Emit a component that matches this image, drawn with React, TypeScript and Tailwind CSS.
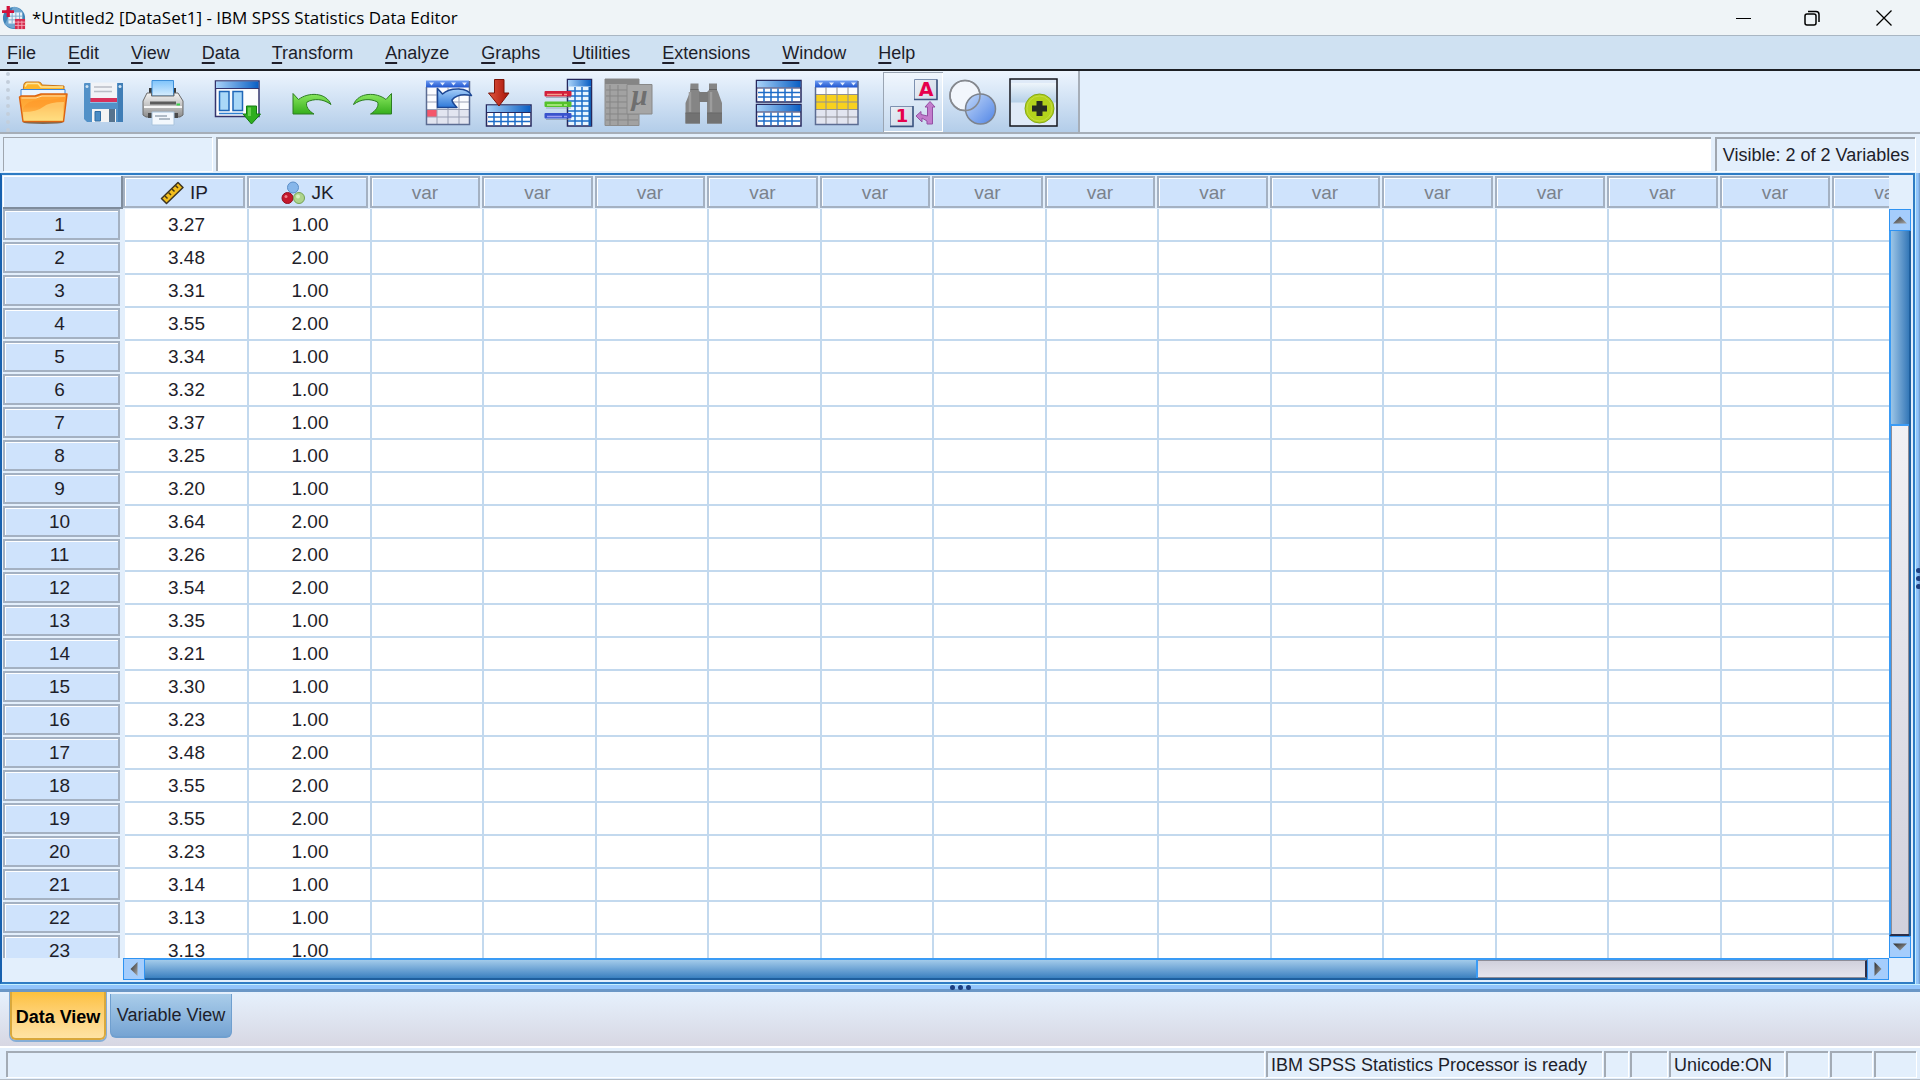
import type { ReactNode } from "react";

// ── Data ─────────────────────────────────────────────────────────────

const MENUS = [
	"File",
	"Edit",
	"View",
	"Data",
	"Transform",
	"Analyze",
	"Graphs",
	"Utilities",
	"Extensions",
	"Window",
	"Help",
];

const CASES: [string, string][] = [
	["3.27", "1.00"],
	["3.48", "2.00"],
	["3.31", "1.00"],
	["3.55", "2.00"],
	["3.34", "1.00"],
	["3.32", "1.00"],
	["3.37", "1.00"],
	["3.25", "1.00"],
	["3.20", "1.00"],
	["3.64", "2.00"],
	["3.26", "2.00"],
	["3.54", "2.00"],
	["3.35", "1.00"],
	["3.21", "1.00"],
	["3.30", "1.00"],
	["3.23", "1.00"],
	["3.48", "2.00"],
	["3.55", "2.00"],
	["3.55", "2.00"],
	["3.23", "1.00"],
	["3.14", "1.00"],
	["3.13", "1.00"],
	["3.13", "1.00"],
];

const EMPTY_COLUMNS = Array.from({ length: 14 }, (_, i) => i);

// ── Toolbar icons (60x60 grid) ───────────────────────────────────────

function Lines({ xs = [], ys = [], x1, x2, y1, y2, color, width = 1 }: {
	xs?: number[];
	ys?: number[];
	x1: number;
	x2: number;
	y1: number;
	y2: number;
	color: string;
	width?: number;
}) {
	return (
		<g stroke={color} strokeWidth={width}>
			{xs.map((x) => <path key={`x${x}`} d={`M${x} ${y1}V${y2}`} />)}
			{ys.map((y) => <path key={`y${y}`} d={`M${x1} ${y}H${x2}`} />)}
		</g>
	);
}

function Gradients() {
	return (
		<svg className="absolute size-0" aria-hidden="true">
			<defs>
				<linearGradient id="folder" x1="0" y1="0" x2="0" y2="1">
					<stop offset="0" stopColor="#ffa02c" />
					<stop offset="0.45" stopColor="#ffab3a" />
					<stop offset="1" stopColor="#fff08a" />
				</linearGradient>
				<linearGradient id="bar" x1="0" y1="0" x2="1" y2="0">
					<stop offset="0" stopColor="#a9d2f8" />
					<stop offset="1" stopColor="#0a5fc4" />
				</linearGradient>
				<linearGradient id="sheetHead" x1="0" y1="0" x2="0" y2="1">
					<stop offset="0" stopColor="#6f9df2" />
					<stop offset="1" stopColor="#1f55cf" />
				</linearGradient>
				<linearGradient id="paper" x1="0" y1="0" x2="0" y2="1">
					<stop offset="0" stopColor="#7fc4fb" />
					<stop offset="1" stopColor="#d8eefe" />
				</linearGradient>
				<linearGradient id="printer" x1="0" y1="0" x2="0" y2="1">
					<stop offset="0" stopColor="#f4f4f4" />
					<stop offset="0.5" stopColor="#c4c4c4" />
					<stop offset="1" stopColor="#8c8c8c" />
				</linearGradient>
				<linearGradient id="green" x1="0" y1="0" x2="0" y2="1">
					<stop offset="0" stopColor="#8be860" />
					<stop offset="1" stopColor="#35ae1c" />
				</linearGradient>
				<linearGradient id="blueArrow" x1="0" y1="0" x2="0" y2="1">
					<stop offset="0" stopColor="#a8d0fa" />
					<stop offset="1" stopColor="#2e78d8" />
				</linearGradient>
				<linearGradient id="red" x1="0" y1="0" x2="1" y2="0">
					<stop offset="0" stopColor="#e0563f" />
					<stop offset="1" stopColor="#a81208" />
				</linearGradient>
				<linearGradient id="tile" x1="0" y1="0" x2="1" y2="1">
					<stop offset="0" stopColor="#ffffff" />
					<stop offset="1" stopColor="#b9c8de" />
				</linearGradient>
				<linearGradient id="lens" x1="0" y1="0" x2="1" y2="1">
					<stop offset="0" stopColor="#c3d8f8" />
					<stop offset="1" stopColor="#4f84e6" />
				</linearGradient>
				<linearGradient id="glass" x1="0" y1="0" x2="0" y2="1">
					<stop offset="0" stopColor="#eef5fb" />
					<stop offset="1" stopColor="#b4cfe8" />
				</linearGradient>
				<linearGradient id="arrowTip" x1="0" y1="0" x2="1" y2="1">
					<stop offset="0" stopColor="#2c2c2c" />
					<stop offset="1" stopColor="#a8a8a8" />
				</linearGradient>
			</defs>
		</svg>
	);
}

function OpenIcon() {
	return (
		<g strokeLinejoin="round">
			<ellipse cx="30" cy="50.5" rx="20" ry="1.5" fill="#7d6a55" />
			<path d="M9 26 11 12Q11.500 10 14 10H26Q28 10 29 13L51 14V26Z" fill="#fdb62a" stroke="#c8741c" />
			<path d="M12 14.500 14 11.500H25L28 15H50" fill="none" stroke="#ffe69a" strokeWidth="1.500" />
			<path d="M8 17.500H52V25H8Z" fill="#eaf5ff" stroke="#3f86d8" />
			<path d="M6.500 25 8 24H22L28 22H54L50.500 49.500H10Z" fill="url(#folder)" stroke="#dc6412" strokeWidth="1.500" />
			<path d="M9.500 37Q14 27 30 28Q46 28 52 24L49.500 48H11Z" fill="#ff8d20" opacity="0.350" />
			<path d="M10 40Q24 40 30 35T51 30L49.500 48H11Z" fill="#fff6a8" opacity="0.450" />
			<path d="M8.500 26H23L29 24H52" fill="none" stroke="#ffe0a8" />
		</g>
	);
}

function SaveIcon() {
	return (
		<g>
			<path d="M12 11H49Q50 11 50 12V49Q50 50 49 50H14L11 47V12Q11 11 12 11Z" fill="#5291c8" />
			<path d="M45 11H50V50H45Z" fill="#3f7db6" />
			<path d="M17.500 10.500H44V26H17.500Z" fill="#f1f3f7" />
			<path d="M21 15H39M21 19.500H39" stroke="#b9bdc6" strokeWidth="1.500" />
			<path d="M17.500 26H44V30H17.500Z" fill="#d8315b" />
			<path d="M19 37H43V50H19Z" fill="#f4f4f4" />
			<path d="M36 37H42V50H36Z" fill="#56738e" />
			<path d="M22 39.500H27.500V49H22Z" fill="#4b8cc4" stroke="#2f6ca4" />
			<circle cx="14" cy="14.500" r="1.500" fill="#cfe3f4" />
			<circle cx="47" cy="14.500" r="1.500" fill="#cfe3f4" />
			<path d="M17 30.500H44" stroke="#8fbce2" />
		</g>
	);
}

function PrintIcon() {
	return (
		<g strokeLinejoin="round">
			<path d="M16 16H43V23H16Z" fill="#3a3a3a" />
			<path d="M19 8.500H40.500V24H19Z" fill="url(#paper)" stroke="#3c8ed8" />
			<path d="M14 21H18.500V24H41V21H45L50 29V43L47 45H13L10 43V29Z" fill="url(#printer)" stroke="#6a6a6a" />
			<path d="M17 29.500H43V32.500H17Z" fill="#5c5c5c" />
			<path d="M11 34H49V36H11Z" fill="#f6f6f6" />
			<path d="M43.500 31.500H47V33.500H43.500Z" fill="#3bd14a" />
			<path d="M15 41H45V46H15Z" fill="#4a4a4a" />
			<path d="M19 40H41V53H19Z" fill="#f3f8fd" stroke="#a9c4dd" />
			<path d="M22 44H34M26 47H37" stroke="#9aa6b4" strokeWidth="1.500" />
		</g>
	);
}

function RecallIcon() {
	return (
		<g>
			<path d="M7.500 9H51V44.500H7.500Z" fill="#fbfcfe" stroke="#34346c" strokeWidth="1.500" />
			<path d="M8 9.500H50.500V16H8Z" fill="url(#bar)" />
			<path d="M8 16.500H51" stroke="#34346c" />
			<path d="M11.500 19.500H21V38.500H11.500ZM25 19.500H34.500V38.500H25Z" fill="#a9d8f8" stroke="#1e66b8" strokeWidth="1.500" />
			<path d="M11 41.500H35" stroke="#2f7fd0" strokeWidth="1.500" />
			<path d="M38.500 34H48.500V42H52.500L43.500 52 35 42H38.500Z" fill="#2fae1e" stroke="#127a10" />
			<path d="M40 35.500H43V44H40Z" fill="#7fdc60" opacity="0.700" />
		</g>
	);
}

const CURVED_ARROW = "M10 21.500 15.500 27.500C25 20 43 20 48 32.500C40 26.500 31 26.500 24 30C22 34 26 39 31 42H10Z";

function UndoIcon() {
	return <path d={CURVED_ARROW} fill="url(#green)" stroke="#2c7d22" strokeLinejoin="round" />;
}

function RedoIcon() {
	return (
		<g transform="translate(58.500 0) scale(-1 1)">
			<path d={CURVED_ARROW} fill="url(#green)" stroke="#2c7d22" strokeLinejoin="round" />
		</g>
	);
}

function SheetBase({ x }: { x: number }) {
	const columns = [0, 11, 22, 33];
	return (
		<g>
			<path d={`M${x} 9H${x + 43}V52.500H${x}Z`} fill="#fbfcff" />
			<path d={`M${x} 38H${x + 43}V52.500H${x}Z`} fill="#e2e5f0" />
			<path d={`M${x} 8.500H${x + 43}V15.500H${x}Z`} fill="url(#sheetHead)" />
			{columns.map((c) => (
				<path key={c} d={`M${x + c + 3} 10.500H${x + c + 8}L${x + c + 5.5} 13.500Z`} fill="#e6f0ff" />
			))}
		</g>
	);
}

function GoToCaseIcon() {
	return (
		<g>
			<SheetBase x={8} />
			<path d="M8 37.500H19V45H8Z" fill="#f4566a" />
			<Lines xs={[19, 30, 41]} ys={[23, 30, 37.5, 45]} x1={8} x2={51} y1={15} y2={52.5} color="#9aa0b4" />
			<path d="M8.500 15V52.500H51.500V9" fill="none" stroke="#5b6c92" strokeWidth="1.500" />
			<path d="M19.500 16.500 24.500 22C32 15 50 15 53.500 23.500C46 22 38 23 34 28C34 31 37 33 39 35.500H19.500Z" fill="url(#blueArrow)" stroke="#1d4794" strokeWidth="1.500" strokeLinejoin="round" />
		</g>
	);
}

function GoToVariableIcon() {
	return (
		<g>
			<path d="M8.500 33H53V54H8.500Z" fill="#ffffff" stroke="#26285e" strokeWidth="1.500" />
			<path d="M9 33.500H52.500V40H9Z" fill="url(#bar)" />
			<path d="M8 40.500H53" stroke="#26285e" />
			<Lines xs={[16, 23, 30, 37, 44]} ys={[45, 49.5]} x1={10} x2={52} y1={41} y2={53.5} color="#1d6cc8" width={1.5} />
			<path d="M16.500 7.500H26V21H31L21 34 10.500 21H16.500Z" fill="url(#red)" stroke="#7c1409" strokeLinejoin="round" />
		</g>
	);
}

function VariablesIcon() {
	const bars: [number, string, string][] = [
		[19, "#d2203c", "#f6a08c"],
		[29.5, "#55c22c", "#b8f08c"],
		[41, "#3a53cc", "#9b9cf2"],
	];
	return (
		<g>
			<path d="M29.500 7.500H53.500V54H29.500Z" fill="#e8f5ff" stroke="#26285e" strokeWidth="1.500" />
			<path d="M30 8H53V14.500H30Z" fill="url(#bar)" />
			<path d="M50.500 15H53V54H50.500Z" fill="#1560b4" />
			<Lines xs={[37, 44]} ys={[19, 24, 29, 34, 39, 44, 49]} x1={30} x2={52} y1={15} y2={53.5} color="#1d6cc8" width={1.5} />
			{bars.map(([y, color, shine]) => (
				<g key={y}>
					<path d={`M8 ${y + 6.5}H33`} stroke="#7d8a99" opacity="0.600" />
					<rect x="6.500" y={y} width="27" height="5.500" rx="1" fill={color} />
					<path d={`M9 ${y + 3.5}H24M26 ${y + 3.5}H29`} stroke={shine} strokeWidth="1.500" />
				</g>
			))}
		</g>
	);
}

function DescriptivesIcon() {
	return (
		<g>
			<path d="M7 7H41V53.500H7Z" fill="#a2a2a2" stroke="#8c8c8c" />
			<path d="M7 7H41V12H7Z" fill="#858585" />
			<Lines xs={[12, 20, 30]} ys={[18, 24, 30, 36, 42, 48]} x1={8} x2={40} y1={13} y2={53} color="#858585" />
			<path d="M29 12.500H54V42H29Z" fill="#a6a6a6" stroke="#888888" />
			<text x="41.500" y="33" textAnchor="middle" fontSize="29" fontStyle="italic" fontWeight="700" fontFamily="Liberation Serif, serif" fill="#6f6f6f">μ</text>
		</g>
	);
}

function FindIcon() {
	return (
		<g>
			<path d="M17.500 11.500H25.500V18L27 20V51.500H12.500V31L17 20ZM36 11.500H44V18L45 20 49 31V51.500H34V20L36 18Z" fill="#858585" />
			<path d="M26 20H35V30H26Z" fill="#7a7a7a" />
			<path d="M12.500 41H27V51.500H12.500ZM34 41H49V51.500H34Z" fill="#727272" />
			<path d="M17 20V40M38 20V40" stroke="#9c9c9c" strokeWidth="2.500" />
			<path d="M17.500 17.500H25.500M36 17.500H44M12.500 41H27M34 41H49" stroke="#686868" />
		</g>
	);
}

function SplitIcon() {
	return (
		<g>
			{[8.5, 32.5].map((y) => (
				<g key={y}>
					<path d={`M8.500 ${y}H53V${y + 21.5}H8.500Z`} fill="#ffffff" stroke="#26285e" strokeWidth="1.500" />
					<path d={`M9 ${y + 0.5}H52.500V${y + 7}H9Z`} fill="url(#bar)" />
					<path d={`M8 ${y + 7.5}H53`} stroke="#26285e" />
					<Lines xs={[16, 23, 30, 37, 44]} ys={[y + 12, y + 16.5]} x1={10} x2={52} y1={y + 8} y2={y + 21} color="#1d6cc8" width={1.5} />
				</g>
			))}
		</g>
	);
}

function SelectIcon() {
	return (
		<g>
			<SheetBase x={7} />
			<path d="M7 22.500H50V37H7Z" fill="#f8d11e" />
			<Lines xs={[18, 29, 40]} ys={[22.5, 30, 37.5, 45]} x1={7} x2={50} y1={15} y2={52.5} color="#8f8f96" />
			<path d="M7.500 15V52.500H50V9" fill="none" stroke="#5b6c92" strokeWidth="1.500" />
		</g>
	);
}

function ValueLabelsIcon() {
	return (
		<g>
			<path d="M31.500 7.500H54V27.500H31.500ZM7.500 34.500H30V54H7.500Z" fill="url(#tile)" stroke="#7d90b0" />
			<path d="M54 7.500V27.500H31M30 34V54.500H7" fill="none" stroke="#3c5480" strokeWidth="1.500" />
			<text x="43" y="24" textAnchor="middle" fontSize="19" fontWeight="700" fontFamily="DejaVu Sans, sans-serif" fill="#e6004c">A</text>
			<text x="19" y="50" textAnchor="middle" fontSize="18" fontWeight="700" fontFamily="DejaVu Sans, sans-serif" fill="#e6004c">1</text>
			<path d="M47 29.500 52 35H49.500V52H44V49L39 46V50L33 44 38 39.500V42.500L44.500 44V35H42Z" fill="#c27ccc" stroke="#9450a4" strokeLinejoin="round" />
		</g>
	);
}

function VariableSetsIcon() {
	return (
		<g strokeWidth="1.500">
			<circle cx="22" cy="23.500" r="15" fill="#f2f6fc" stroke="#86898f" />
			<circle cx="37.500" cy="37" r="15" fill="url(#lens)" stroke="#7c828c" />
			<circle cx="22" cy="23.500" r="15" fill="none" stroke="#86898f" />
		</g>
	);
}

function CustomizeIcon() {
	return (
		<g>
			<path d="M7 7H54V54H7Z" fill="#dfeaf8" />
			<path d="M8 11H53V30.500H8Z" fill="url(#glass)" />
			<path d="M7 7H54V54H7Z" fill="none" stroke="#14161c" strokeWidth="1.500" />
			<circle cx="36.500" cy="36.500" r="14.500" fill="#b4d21c" stroke="#84a814" />
			<circle cx="36.500" cy="36.500" r="12.500" fill="none" stroke="#c4dc40" />
			<path d="M33.500 29H39.500V33.500H44V39.500H39.500V44H33.500V39.500H29V33.500H33.500Z" fill="#262a24" />
		</g>
	);
}

type Tool = { label: string; icon: ReactNode; disabled?: boolean; pressed?: boolean };

const TOOL_GROUPS: Tool[][] = [
	[
		{ label: "Open data document", icon: <OpenIcon /> },
		{ label: "Save this document", icon: <SaveIcon /> },
		{ label: "Print", icon: <PrintIcon /> },
	],
	[{ label: "Recall recently used dialogs", icon: <RecallIcon /> }],
	[
		{ label: "Undo", icon: <UndoIcon /> },
		{ label: "Redo", icon: <RedoIcon /> },
	],
	[
		{ label: "Go to case", icon: <GoToCaseIcon /> },
		{ label: "Go to variable", icon: <GoToVariableIcon /> },
		{ label: "Variables", icon: <VariablesIcon /> },
		{ label: "Run descriptive statistics", icon: <DescriptivesIcon />, disabled: true },
	],
	[{ label: "Find", icon: <FindIcon />, disabled: true }],
	[
		{ label: "Split file", icon: <SplitIcon /> },
		{ label: "Select cases", icon: <SelectIcon /> },
	],
	[
		{ label: "Value labels", icon: <ValueLabelsIcon />, pressed: true },
		{ label: "Use variable sets", icon: <VariableSetsIcon /> },
		{ label: "Customize toolbar", icon: <CustomizeIcon /> },
	],
];

// ── Window chrome ────────────────────────────────────────────────────

function AppLogo() {
	return (
		<svg viewBox="0 0 26 26" className="size-6" aria-hidden="true">
			<circle cx="13" cy="13" r="12" fill="#3f83b8" />
			<path d="M3 20Q8 24 14 24L20 14 22 6Q16 0 12 1Z" fill="#6fa6d0" />
			<path d="M7 7H22V19H7Z" fill="#e9f2f9" />
			<Lines xs={[11, 15, 19]} ys={[11, 15]} x1={7} x2={22} y1={7} y2={19} color="#7ca9cc" />
			<path d="M14 14H25V25H14Z" fill="#d62a4c" />
			<Lines xs={[17.5, 21.5]} ys={[17.5, 21]} x1={14} x2={25} y1={16} y2={25} color="#f4a9b8" />
			<path d="M5 0H8.500V4.500H13V7.500H8.500V12H5V7.500H0V4.500H5Z" fill="#d4123a" />
		</svg>
	);
}

function TitleBar() {
	return (
		<header className="flex h-9 shrink-0 items-center border-b border-[#a9b6c3] bg-[#eff4f7]">
			<div className="flex flex-1 items-center gap-1.5 pl-0.5">
				<AppLogo />
				<h1 className="font-['Open_Sans','Noto_Sans',sans-serif] text-[17px] text-black">
					*Untitled2 [DataSet1] - IBM SPSS Statistics Data Editor
				</h1>
			</div>
			<div className="flex h-full text-black">
				<button type="button" aria-label="Minimize" className="flex w-17 items-center justify-center pl-1">
					<svg viewBox="0 0 16 16" className="size-4" stroke="currentColor"><path d="M0 8.500H15" /></svg>
				</button>
				<button type="button" aria-label="Restore" className="flex w-18 items-center justify-center">
					<svg viewBox="0 0 16 16" className="size-4" fill="none" stroke="currentColor" strokeWidth="1.500">
						<rect x="1" y="4" width="11" height="11" rx="2" />
						<path d="M4 1.500H12Q15 1.500 15 4.500V12" />
					</svg>
				</button>
				<button type="button" aria-label="Close" className="flex w-18 items-center justify-center">
					<svg viewBox="0 0 16 16" className="size-4" stroke="currentColor" strokeWidth="1.300"><path d="M0.500 0.500 15.500 15.500M15.500 0.500 0.500 15.500" /></svg>
				</button>
			</div>
		</header>
	);
}

function MenuBar() {
	return (
		<nav className="flex h-[35px] shrink-0 items-center gap-8 border-b-2 border-[#1c1f24] bg-[#cfe1f2] pl-[7px]">
			{MENUS.map((menu) => (
				<button key={menu} type="button">
					<span className="underline decoration-2 underline-offset-3">{menu[0]}</span>
					{menu.slice(1)}
				</button>
			))}
		</nav>
	);
}

function ToolBar() {
	return (
		<div className="flex h-[63px] shrink-0 border-b-2 border-[#a6aeb8]">
			<div role="toolbar" className="flex border-r-2 border-[#a6aeb8] bg-linear-to-b from-[#edf5fe] to-[#b3cde9] pt-px">
				<div className="ml-1.5 mr-[3px] h-15 border-l-4 border-dotted border-[#c3cedb]" />
				<div className="flex gap-[15px] pr-[15px]">
					{TOOL_GROUPS.map((group, i) => (
						<div key={i} className="flex">
							{group.map((tool) => (
								<button
									key={tool.label}
									type="button"
									aria-label={tool.label}
									aria-pressed={tool.pressed}
									disabled={tool.disabled}
									className={`size-15 ${tool.pressed ? "bg-white/25 shadow-[inset_1px_1px_0_#9aa5b3,inset_-1px_-1px_0_#ffffff]" : ""}`}
								>
									<svg viewBox="0 0 60 60" className="size-15" fill="none">{tool.icon}</svg>
								</button>
							))}
						</div>
					))}
				</div>
			</div>
		</div>
	);
}

function CellEntryBar() {
	return (
		<div className="flex h-[39px] shrink-0 gap-1 px-[3px] pb-0.5 pt-[3px]">
			<input
				aria-label="Cell name"
				readOnly
				className="w-[209px] border-l border-t border-[#9fa6af] bg-[#e3effc] shadow-[1px_1px_0_#ffffff] outline-none"
			/>
			<input
				aria-label="Cell value"
				className="min-w-0 flex-1 border-l-2 border-t-2 border-[#a3a9b0] bg-white px-1 outline-none"
			/>
			<div className="mr-0.5 flex w-50 items-center justify-center border-l-2 border-t-2 border-[#9fa6af] shadow-[1px_1px_0_#ffffff]">
				Visible: 2 of 2 Variables
			</div>
		</div>
	);
}

// ── Data grid ────────────────────────────────────────────────────────

function ScaleIcon() {
	return (
		<svg viewBox="0 0 24 24" className="size-6" aria-hidden="true">
			<path d="M1.500 17.500 18 1.500 23 6.500 6.500 22.500Z" fill="#f2bd1c" stroke="#3c3424" strokeWidth="1.500" strokeLinejoin="round" />
			<path d="M5 15 7.500 17.500M8.500 11.500 11 14M12 8 14.500 10.500M15.500 4.500 18 7" stroke="#4a3a10" strokeWidth="1.500" />
		</svg>
	);
}

function NominalIcon() {
	return (
		<svg viewBox="0 0 24 24" className="size-6" aria-hidden="true">
			<circle cx="12" cy="6.500" r="5.500" fill="#86b6ea" stroke="#5b8ec8" />
			<circle cx="6.500" cy="17" r="5.500" fill="#c4182c" stroke="#921020" />
			<circle cx="18" cy="17" r="5.500" fill="#aed48c" stroke="#74a254" />
			<circle cx="5" cy="15.500" r="1.500" fill="#ee8088" />
			<circle cx="17" cy="15.500" r="2" fill="#d6efc0" />
		</svg>
	);
}

function ColumnHeader({ children }: { children: ReactNode }) {
	return (
		<th scope="col" className="p-0 pb-px pr-0.5 font-normal">
			<div className="flex h-8 items-center justify-center gap-1.5 border-2 border-[#a4b1c2] bg-[#cfe3fc] pt-0.5 shadow-[inset_1px_1px_0_#ffffff]">
				{children}
			</div>
		</th>
	);
}

function DataGrid() {
	return (
		<div className="min-h-0 min-w-0 overflow-hidden">
			<table className="w-[1942px] table-fixed border-collapse text-center text-[19px]">
				<colgroup>
					<col className="w-30" />
					<col className="w-31" />
					<col className="w-[123px]" />
					{EMPTY_COLUMNS.map((i) => (
						<col key={i} className={i % 2 === 0 ? "w-28" : "w-[113px]"} />
					))}
				</colgroup>
				<thead>
					<tr className="h-[33px] bg-[#e3effc]">
						<td className="p-0">
							<div className="h-[33px] border-b-2 border-r-2 border-[#7f8c9c] bg-[#cfe3fc] shadow-[inset_1px_1px_0_#ffffff]" />
						</td>
						<ColumnHeader>
							<ScaleIcon />
							IP
						</ColumnHeader>
						<ColumnHeader>
							<NominalIcon />
							JK
						</ColumnHeader>
						{EMPTY_COLUMNS.map((i) => (
							<ColumnHeader key={i}>
								<span className="text-[#7b828c]">var</span>
							</ColumnHeader>
						))}
					</tr>
				</thead>
				<tbody>
					{CASES.map(([ip, jk], row) => (
						<tr key={row} className="h-[33px]">
							<th scope="row" className="bg-[#e3effc] p-0 pb-0.5 pr-[3px] font-normal">
								<div className="flex h-[31px] items-center justify-center border-2 border-[#a4b1c2] bg-[#cfe3fc] pr-1 shadow-[inset_1px_1px_0_#ffffff]">
									{row + 1}
								</div>
							</th>
							<td className="p-0 pb-0.5 pl-[3px] shadow-[inset_2px_0_0_#e3effc,inset_0_-2px_0_#c3d9ee]">{ip}</td>
							<td className="p-0 pb-0.5 pl-[3px] shadow-[inset_2px_0_0_#c3d9ee,inset_0_-2px_0_#c3d9ee]">{jk}</td>
							{EMPTY_COLUMNS.map((i) => (
								<td key={i} className="p-0 shadow-[inset_2px_0_0_#c3d9ee,inset_0_-2px_0_#c3d9ee]" />
							))}
						</tr>
					))}
				</tbody>
			</table>
		</div>
	);
}

function ScrollButton({ label, d }: { label: string; d: string }) {
	return (
		<button
			type="button"
			aria-label={label}
			className="flex size-[22px] shrink-0 items-center justify-center border border-[#2f93f2] bg-[#a5cdfc]"
		>
			<svg viewBox="0 0 14 14" className="size-3.5"><path d={d} fill="url(#arrowTip)" /></svg>
		</button>
	);
}

function VerticalScroll() {
	return (
		<div className="mt-[33px] flex w-[22px] flex-col border-r-2 border-[#1f5f9e] bg-linear-to-b from-white to-[#cfcfdb]">
			<ScrollButton label="Scroll up" d="M0 10.500H14L7 3.500Z" />
			<div className="h-[26%] border-b-2 border-l-2 border-[#3a9bf5] bg-linear-to-r from-[#9cc5e6] to-[#3478b8]" />
			<div className="flex flex-1 border-b-2 border-l-2 border-b-[#2c2f4a] border-l-[#3a9bf5]">
				<div className="flex-1 border-x border-[#8d8d98]" />
			</div>
			<ScrollButton label="Scroll down" d="M0 3.500H14L7 10.500Z" />
		</div>
	);
}

function HorizontalScroll() {
	return (
		<div className="ml-30 flex h-[22px] border-b-2 border-t-2 border-b-[#1f5f9e] border-t-[#3a9bf5] bg-linear-to-b from-[#cfcfdb] to-[#e6e6ee]">
			<div className="-my-0.5 flex">
				<ScrollButton label="Scroll left" d="M10.500 0V14L3.500 7Z" />
			</div>
			<div className="w-[75.500%] border-r-2 border-[#3a9bf5] bg-linear-to-b from-[#a3cbea] to-[#3a80c0]" />
			<div className="flex-1 border-b border-r-2 border-t border-[#8d8d98] border-r-[#2c2f4a]" />
			<div className="-my-0.5 flex">
				<ScrollButton label="Scroll right" d="M3.500 0V14L10.500 7Z" />
			</div>
		</div>
	);
}

function GripDots({ vertical = false }: { vertical?: boolean }) {
	return (
		<span className={`flex gap-[3px] ${vertical ? "flex-col" : ""}`}>
			<i className="size-[5px] rounded-full bg-[#1d3f80]" />
			<i className="size-[5px] rounded-full bg-[#1d3f80]" />
			<i className="size-[5px] rounded-full bg-[#1d3f80]" />
		</span>
	);
}

function DataPane() {
	return (
		<main className="flex min-h-0 flex-1 flex-col">
			<div className="flex min-h-0 flex-1">
				<div className="grid min-h-0 min-w-0 flex-1 grid-cols-[1fr_24px] grid-rows-[1fr_24px] border-2 border-[#2f7cc4] border-l-[#1660ae] bg-[#e3effc] pl-px pt-px">
					<div className="grid min-h-0 min-w-0 bg-white">
						<DataGrid />
					</div>
					<VerticalScroll />
					<HorizontalScroll />
				</div>
				<div className="flex w-[5px] items-center overflow-hidden border-l border-[#c4f0ff] bg-linear-to-r from-[#92c4fb] from-50% to-[#6b97c6]">
					<GripDots vertical />
				</div>
			</div>
			<div className="flex h-2 shrink-0 items-center justify-center border-b-3 border-t border-b-[#6b97c6] border-t-[#c4f0ff] bg-[#92c4fb]">
				<GripDots />
			</div>
		</main>
	);
}

// ── Footer ───────────────────────────────────────────────────────────

function ViewTabs() {
	return (
		<div role="tablist" className="flex h-14 shrink-0 items-start gap-1 border-b-2 border-white bg-linear-to-b from-[#e6f1fd] to-[#d7d7e3] pl-2.5">
			<button
				type="button"
				role="tab"
				aria-selected="true"
				className="flex h-12 w-24 items-center justify-center rounded-b-md border-2 border-t-0 border-[#d9a83c] bg-linear-to-b from-[#fdc13c] to-[#ffe3a4] pt-1 font-bold whitespace-nowrap text-black shadow-[0_1px_0_1px_#86add6]"
			>
				Data View
			</button>
			<button
				type="button"
				role="tab"
				aria-selected="false"
				className="mt-0.5 flex h-11 w-[122px] items-center justify-center rounded-b-md border-x border-b-2 border-[#6f9fcf] bg-linear-to-b from-[#aacdea] to-[#76a4d3] whitespace-nowrap"
			>
				Variable View
			</button>
		</div>
	);
}

function StatusCell({ className, children }: { className: string; children?: ReactNode }) {
	return (
		<div className={`flex items-center border-l-2 border-t-2 border-[#a3abb5] pl-[3px] whitespace-nowrap shadow-[1px_1px_0_#ffffff] ${className}`}>
			{children}
		</div>
	);
}

function StatusBar() {
	return (
		<footer className="flex h-8 shrink-0 gap-0.5 border-b border-[#b4bcc6] pb-0.5 pl-1.5 pr-1 pt-[3px]">
			<StatusCell className="flex-1" />
			<StatusCell className="w-[336px]">IBM SPSS Statistics Processor is ready</StatusCell>
			<StatusCell className="w-6" />
			<StatusCell className="w-[37px]" />
			<StatusCell className="w-[115px]">Unicode:ON</StatusCell>
			<StatusCell className="w-[42px]" />
			<StatusCell className="w-[42px]" />
			<StatusCell className="w-[42px]" />
		</footer>
	);
}

export default function App() {
	return (
		<div className="flex h-screen flex-col overflow-hidden bg-[#e3effc] font-['Liberation_Sans',Arial,sans-serif] text-[18px] leading-6 text-[#1e1e2a]">
			<Gradients />
			<TitleBar />
			<MenuBar />
			<ToolBar />
			<CellEntryBar />
			<DataPane />
			<ViewTabs />
			<StatusBar />
		</div>
	);
}
